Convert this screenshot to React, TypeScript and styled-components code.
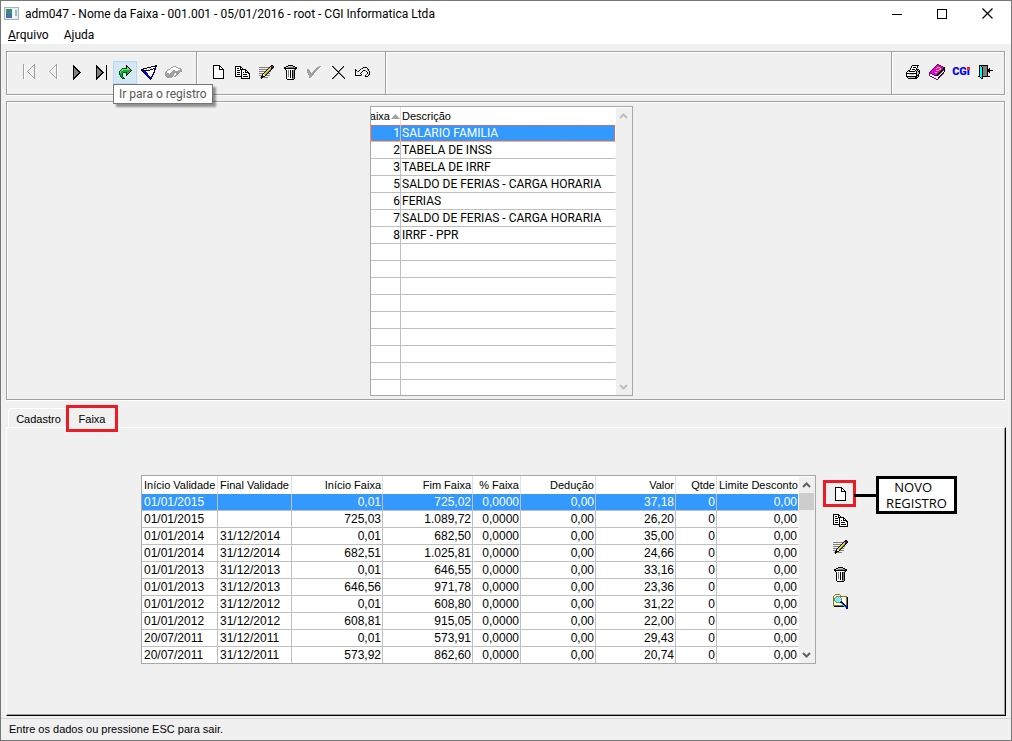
import React from "react";
import styled, { createGlobalStyle } from "styled-components";

const ui = 'Roboto, "Open Sans", sans-serif';
const grid = '"Liberation Sans", Arial, sans-serif';
const note = '"Open Sans", "Noto Sans", sans-serif';
const face = "#f0f0f0";
const line = "#a0a0a0";

const GlobalStyle = createGlobalStyle`
  *, *::before, *::after { box-sizing: border-box; }
  body { margin: 0; background: ${face}; color: #000; font: 11px/16px ${grid}; }
  button { margin: 0; padding: 0; border: 0; background: none; color: inherit; font: inherit; }
`;

/* ---------- pixel icons ---------- */

const palette: Record<string, string> = {
  K: "#000000",
  W: "#ffffff",
  G: "#808080",
  L: "#c0c0c0",
  A: "#a0a0a0",
  Y: "#e8e000",
  O: "#808000",
  M: "#e000e0",
  P: "#800080",
  B: "#0000ff",
  N: "#000080",
  C: "#00ffff",
  E: "#00b030",
  D: "#005018",
  H: "#70e870",
};

const art: Record<string, string[]> = {
  first: [
    "A..........A",
    "AW........AA",
    "AW.......AWA",
    "AW......AW.A",
    "AW.....AW..A",
    "AW....AW...A",
    "AW...AW....A",
    "AW..AW.....A",
    "AW...AW....A",
    "AW....AW...A",
    "AW.....AW..A",
    "AW......AW.A",
    "AW.......AWA",
    "AW........AA",
    "AW.........A",
    ".W..........",
  ],
  prev: [
    ".......A.",
    "......AAW",
    ".....AWAW",
    "....AW.AW",
    "...AW..AW",
    "..AW...AW",
    ".AW....AW",
    "AW.....AW",
    ".AW....AW",
    "..AW...AW",
    "...AW..AW",
    "....AW.AW",
    ".....AWAW",
    "......AAW",
    ".......AW",
    "........W",
  ],
  next: [
    "K.......",
    "KK......",
    "KKK.....",
    "KGKK....",
    "KGGKK...",
    "KGGGKK..",
    "KGGGGKK.",
    "KGGGGGKK",
    "KGGGGKK.",
    "KGGGKK..",
    "KGGKK...",
    "KGKK....",
    "KKK.....",
    "KK......",
    "K.......",
  ],
  last: [
    "K.........K",
    "KK........K",
    "KKK.......K",
    "KGKK......K",
    "KGGKK.....K",
    "KGGGKK....K",
    "KGGGGKK...K",
    "KGGGGGKK..K",
    "KGGGGKK...K",
    "KGGGKK....K",
    "KGGKK.....K",
    "KGKK......K",
    "KKK.......K",
    "KK........K",
    "K.........K",
  ],
  go: [
    ".......K.....",
    ".......KK....",
    ".......KHK...",
    "...DDDDKHHK..",
    "..DHHHHHHHHK.",
    ".DHHEEEEEEEEK",
    "DHEEEEEEEEEK.",
    "DHEEDDDDEEK..",
    "DEED...DEK...",
    "DEED...DK....",
    ".DED...K.....",
    ".DED.........",
    "..DED........",
    "...DDD.......",
  ],
  filter: [
    "..............KK",
    "..........KKKKBK",
    "......KKKKWWWWK.",
    "..KKKKWWLWLWKBK.",
    "KKBWWLWLWKKKWBK.",
    "KKKKKKKKKWWWWK..",
    ".KBBBWWWWWWWWK..",
    "..KBBBWWWWWWBK..",
    "...KBBBWWWWWK...",
    "....KBBWWWWBK...",
    ".....KBBWWWK....",
    "......KBBWBK....",
    ".......KBBK.....",
    "........KBK.....",
    ".........K......",
  ],
  eraser: [
    "........AAA......",
    "......AAWWWAA....",
    ".....AWWWWWWWAAA.",
    "...AAWWWWWWWWWWAA",
    "..AWWWWWAAWWWAAAA",
    ".AWWWWWAAAAAAAAAA",
    "AAWWWWAAAAAAAAAW.",
    "AAAAWAAAAAWAAAW..",
    "AAAAAAAAAWWAAW...",
    "AAAAAAAAAWAAW....",
    "WAAAAAAAWAAW.....",
    ".WAAAAAWWWW......",
    "..WWWWWW.........",
  ],
  doc: [
    "KKKKKKK....",
    "KWWWWWKK...",
    "KWWWWWKWK..",
    "KWWWWWKWWK.",
    "KWWWWWKKKKK",
    "KWWWWWWWWWK",
    "KWWWWWWWWWK",
    "KWWWWWWWWWK",
    "KWWWWWWWWWK",
    "KWWWWWWWWWK",
    "KWWWWWWWWWK",
    "KWWWWWWWWWK",
    "KWWWWWWWWWK",
    "KKKKKKKKKKK",
  ],
  copy: [
    "KKKKKK.........",
    "KWWWWKK........",
    "KWKKWKWK.......",
    "KWWWWKKKKKK....",
    "KWKKKWKWWWKK...",
    "KWWWWWKWWWKWK..",
    "KWKKKWKWKWKKKK.",
    "KWWWWWKWWWWWWKK",
    "KWKKKWKWKKKKWWK",
    "KWWWWWKWWWWWWWK",
    "KKKKKKKWKKKKKWK",
    "......KWWWWWWWK",
    "......KKKKKKKKK",
  ],
  edit: [
    "............KK.",
    "...........KPPK",
    "GGGGGGGGGGKLPPK",
    ".........KYLKK.",
    "GGGGGGGGKYYOK..",
    ".......KYYOK...",
    "GGGGGGKYYOKG...",
    ".....KYYOK.....",
    "GGGGKYYOKGG....",
    "...KWYOK.......",
    "GGGKWWKGGGG....",
    "..KKKK.........",
    ".GKKGGGGG......",
    "..K............",
  ],
  trash: [
    "....KKKKK....",
    "..KKLLLLLKK..",
    "KKLLGGGGGGGKK",
    "KKKKKKKKKKKKK",
    ".KWWWWWWWWGK.",
    "..KWGWKWKGK..",
    "..KWGWKWKGK..",
    "..KWGWKWKGK..",
    "..KWGWKWKGK..",
    "..KWGWKWKGK..",
    "..KWGWKWKGK..",
    "..KWGWKWKGK..",
    "..KWWWKWKGK..",
    "..KWWWWWGGK..",
    "...KKKKKKK...",
  ],
  check: [
    "............AA",
    "..........AAAW",
    ".........AAAW.",
    "AA......AAAW..",
    "AAA....AAAW...",
    "AAA...AAAW....",
    "AAAA.AAAW.....",
    ".AAAAAAW......",
    ".AAAAAAW......",
    "..AAAAW.......",
    "..AAAW........",
    "..AAW.........",
    "...W..........",
  ],
  cancel: [
    "KG.........K.",
    ".KG.......KG.",
    "..KG.....KG..",
    "...KG...KG...",
    "....KG.KG....",
    ".....KKG.....",
    "......KG.....",
    ".....KGKG....",
    "....KG..KG...",
    "...KG....KG..",
    "..KG......KG.",
    ".KG........KG",
    "KG..........K",
  ],
  undo: [
    "........KKKK...",
    "......GK....K..",
    "K....K......GK.",
    "KK..K...KKG..K.",
    "K.GK...K...K..K",
    "K.....K.....K.K",
    "K....K......K.K",
    "K.....K....G.GK",
    "KKKKKKG...K..K.",
    "..........KKK..",
  ],
  print: [
    "......KKKKKKK.",
    ".....KWWWWWK..",
    ".....KWKKKWK..",
    "....KWWWWWK...",
    "....KWKKKWKKK.",
    "..KKWWWWWKLKLK",
    ".KLKKKKKKLKLKK",
    "KWWWWWWWWWKLLK",
    "KKKKKKKKKKKLLK",
    "KWWWLYYLWWKLK.",
    "KWWWWWWWWWKKK.",
    "KKKKKKKKKKKLK.",
    ".KLLLLLLLKKK..",
    "..KKKKKKKKK...",
  ],
  book: [
    "........PP......",
    ".......PMMPP....",
    "......PMMMMMPP..",
    ".....PMMYYYMMMKK",
    "....PMMYMMMYMMKK",
    "...PMMMMMMYYMKKK",
    "..PMMMMYYYMMKKGK",
    ".PMMMMMMMMMKKGWK",
    "PMMMMMYYMMKKGWK.",
    "PPPMMMMMMKKGWKP.",
    "PWWPPMMMKKGWKP..",
    "PWWWWPPKKGWKP...",
    ".PPWWWWWWWKP....",
    "...PPWWWWKP.....",
    ".....PPWWP......",
    ".......PP.......",
  ],
  exit: [
    ".KKKKKKKKK.....",
    ".KCKGGGGGK.....",
    ".KCCKGGGGK.....",
    ".KCCKGGGGK.K...",
    ".KCCKGGGGKKK...",
    ".KCCKGGGGKKKKKK",
    ".KCCKGGGGKKK...",
    ".KCCKGGGGK.K...",
    ".KCCKGGGGK.....",
    ".KCCKGGGGK.....",
    ".KCCKGGGGK.....",
    "KKCCKKKKKKKK...",
    "..KCK..........",
    "...KK..........",
  ],
  search: [
    "..OOOOO........",
    ".OWWWWWO.......",
    "OWWGGGGOOOOOOO.",
    "OWGCWCWGWWWWWOK",
    "OGCWCWCWGWWWWOK",
    "OGWCWCWCGWWWWOK",
    "OGCWCWCWGWWWWOK",
    "OWGCWCWGKWWWWOK",
    "OWWGGGGKBKWWWOK",
    "OWWWWWWWCBKWWOK",
    "OWWWWWWWWCBKWOK",
    "OOOOOOOOOOCBKOK",
    ".KKKKKKKKKKCBNK",
    "............CBN",
    ".............NN",
  ],
};

function PixelIcon({ name }: { name: string }) {
  const rows = art[name];
  const width = rows[0].length;
  const marks: React.ReactNode[] = [];
  rows.forEach((row, y) => {
    let x = 0;
    while (x < row.length) {
      const key = row[x];
      let end = x + 1;
      while (end < row.length && row[end] === key) end += 1;
      if (key !== ".") {
        marks.push(<rect key={`${x}-${y}`} x={x} y={y} width={end - x} height={1} fill={palette[key]} />);
      }
      x = end;
    }
  });
  return (
    <svg width={width} height={rows.length} viewBox={`0 0 ${width} ${rows.length}`} shapeRendering="crispEdges" aria-hidden="true">
      {marks}
    </svg>
  );
}

/* ---------- window chrome ---------- */

const Window = styled.div`
  display: flex;
  flex-direction: column;
  min-height: 100vh;
  border: 1px solid #777;
  background: ${face};
`;

const TitleBar = styled.header`
  display: flex;
  align-items: center;
  height: 25px;
  padding-left: 3px;
  gap: 6px;
  background: #fff;
  font-family: ${ui};
`;

const Title = styled.h1`
  flex: 1;
  margin: 0;
  font-size: 12px;
  font-weight: 400;
  line-height: 16px;
  white-space: nowrap;
`;

const WindowButton = styled.button`
  display: grid;
  place-items: center;
  width: 40px;
  height: 24px;
`;

const WindowButtons = styled.div`
  display: flex;
  gap: 5px;
  padding-right: 4px;
`;

const MenuBar = styled.nav`
  display: flex;
  gap: 15px;
  height: 18px;
  padding-left: 7px;
  background: #fff;
  font: 12px/18px ${ui};
`;

const Etched = styled.div`
  margin: 0 6px 0 5px;
  border: 1px solid ${line};
  box-shadow: inset 1px 1px #fff, 1px 1px #fff;
`;

const Toolbar = styled(Etched)`
  display: flex;
  height: 44px;
  margin-top: 7px;
`;

const Group = styled.div<{ $divided?: boolean }>`
  display: flex;
  align-items: center;
  padding: 0 11px 2px 10px;
  ${(p) => p.$divided && `border-left: 1px solid ${line}; box-shadow: inset 1px 1px #fff; padding-left: 9px;`}
`;

const Spacer = styled(Group)`
  flex: 1;
`;

const SystemGroup = styled(Group)`
  padding-right: 7px;
`;

const ToolButton = styled.button<{ $hot?: boolean }>`
  position: relative;
  display: grid;
  place-items: center;
  width: 24px;
  height: 23px;
  ${(p) => p.$hot && "background: #d5e6f5; border: 1px solid #b8d8f2;"}
`;

const Tooltip = styled.span`
  position: absolute;
  top: 22px;
  left: -1px;
  z-index: 2;
  padding: 0 5px;
  border: 1px solid #767676;
  background: #fff;
  box-shadow: 3px 3px 2px rgba(0, 0, 0, 0.4);
  color: #575757;
  font: 12px/18px ${ui};
  white-space: nowrap;
`;

const Logo = styled.span`
  position: relative;
  color: #0000ff;
  font: 900 11px/14px ${ui};
`;

const LogoDot = styled.span`
  position: absolute;
  top: 2px;
  right: 0;
  width: 3px;
  height: 3px;
  background: #ff2020;
`;

const ListPanel = styled(Etched)`
  display: flex;
  justify-content: center;
  margin-top: 6px;
  padding: 4px 8px 3px 0;
`;

/* ---------- data grids ---------- */

const GridFrame = styled.div<{ $height?: number }>`
  display: flex;
  border: 1px solid #a8a8ac;
  background: #fff;
  overflow: hidden;
  ${(p) => p.$height && `height: ${p.$height}px;`}
`;

const Table = styled.table<{ $width: number }>`
  width: ${(p) => p.$width}px;
  table-layout: fixed;
  border-collapse: separate;
  border-spacing: 0;
  align-self: flex-start;
`;

const Head = styled.th<{ $right?: boolean }>`
  height: 18px;
  padding: 0 1px 0 2px;
  border-right: 1px solid #e0e0e0;
  font-weight: 400;
  line-height: 18px;
  text-align: ${(p) => (p.$right ? "right" : "left")};
  white-space: nowrap;
  overflow: hidden;
  &:last-child { border-right-color: #fff; }
`;

const SortHead = styled.span`
  display: flex;
  align-items: center;
  justify-content: flex-end;
  gap: 1px;
  overflow: hidden;
  > * { flex-shrink: 0; }
`;

const Cell = styled.td<{ $right?: boolean }>`
  height: 17px;
  padding: 0 1px 0 2px;
  border-right: 1px solid #c0c0c0;
  border-bottom: 1px solid #c0c0c0;
  font-size: 12px;
  line-height: 16px;
  text-align: ${(p) => (p.$right ? "right" : "left")};
  white-space: nowrap;
  overflow: hidden;
  &:last-child { border-right-color: #fff; }
`;

const Row = styled.tr<{ $selected?: boolean; $focus?: boolean }>`
  ${(p) => p.$selected && `color: #fff; ${Cell} { background: #3399ff; background-clip: padding-box; }`}
  ${(p) =>
    p.$focus &&
    `
    ${Cell} { position: relative; }
    ${Cell}::after { content: ""; position: absolute; inset: 0; border: 0 dashed #ff6038; border-width: 1px 0; }
    ${Cell}:first-child::after { border-left-width: 1px; }
    ${Cell}:last-child::after { border-right-width: 1px; }
  `}
`;

const ListTable = styled(Table)`
  ${Cell} { font-family: ${ui}; }
  ${Cell}:first-child, ${Head}:first-child { padding: 0; }
  ${Cell}:last-child, ${Head}:last-child { padding-left: 1px; }
`;

const Track = styled.div`
  display: flex;
  flex-direction: column;
  width: 16px;
  margin-top: 1px;
  background: ${face};
`;

const ScrollButton = styled.button`
  display: grid;
  place-items: center;
  height: 16px;
  padding-right: 1px;
`;

const Thumb = styled.div`
  height: 17px;
  margin-right: 1px;
  background: #cdcdcd;
`;

const TrackSpace = styled.div`
  flex: 1;
`;

function Scrollbar({ color, thumb }: { color: string; thumb?: boolean }) {
  return (
    <Track>
      <ScrollButton aria-label="Rolar para cima">
        <svg width="9" height="6" viewBox="0 0 9 6" aria-hidden="true">
          <path d="M1 5 4.500 1.500 8 5" fill="none" stroke={color} strokeWidth="2" />
        </svg>
      </ScrollButton>
      {thumb && <Thumb />}
      <TrackSpace />
      <ScrollButton aria-label="Rolar para baixo">
        <svg width="9" height="6" viewBox="0 0 9 6" aria-hidden="true">
          <path d="M1 1 4.500 4.500 8 1" fill="none" stroke={color} strokeWidth="2" />
        </svg>
      </ScrollButton>
    </Track>
  );
}

/* ---------- tabs and detail page ---------- */

const Tabs = styled.div`
  display: flex;
  align-items: flex-end;
  height: 27px;
  padding-left: 7px;
`;

const Tab = styled.button`
  width: 58px;
  height: 19px;
  padding: 1px 0 0 2px;
  border: 1px solid #fff;
  border-width: 1px 0 0 1px;
  border-radius: 3px 0 0 0;
  line-height: 16px;
`;

const ActiveTab = styled.button`
  position: relative;
  width: 52px;
  height: 27px;
  margin-bottom: -5px;
  border: 3px solid #ed1c24;
  background: ${face};
  line-height: 16px;
`;

const Page = styled.main`
  display: flex;
  flex: 1;
  align-items: flex-start;
  margin: 0 5px 2px 5px;
  padding: 47px 0 50px 134px;
  border: 1px solid #fff;
  border-right-color: #000;
  border-bottom-color: #000;
  box-shadow: inset -1px -1px #a0a0a0;
`;

const Actions = styled.div`
  display: flex;
  flex-direction: column;
  align-items: center;
  gap: 3px;
  margin: 5px 0 0 7px;
`;

const ActionButton = styled.button<{ $marked?: boolean }>`
  display: grid;
  place-items: center;
  width: 33px;
  height: 24px;
  padding-left: 1px;
  ${(p) => p.$marked && "height: 27px; margin-bottom: -2px; border: 3px solid #ed1c24;"}
`;

const Callout = styled.div`
  display: flex;
  align-items: center;
  margin-top: 1px;
  margin-left: -2px;
`;

const Connector = styled.div`
  width: 22px;
  height: 3px;
  background: #000;
`;

const CalloutBox = styled.p`
  width: 81px;
  height: 38px;
  margin: 0;
  border: 3px solid #000;
  background: #fff;
  font: 13px/16px ${note};
  text-align: center;
  white-space: pre;
`;

const StatusBar = styled.footer`
  height: 22px;
  padding-left: 8px;
  border-top: 1px solid #d4d4d4;
  line-height: 20px;
`;

const names: [string, string][] = [
  ["1", "SALARIO FAMILIA"],
  ["2", "TABELA DE INSS"],
  ["3", "TABELA DE IRRF"],
  ["5", "SALDO DE FERIAS - CARGA HORARIA"],
  ["6", "FERIAS"],
  ["7", "SALDO DE FERIAS - CARGA HORARIA"],
  ["8", "IRRF - PPR"],
];
const blankRows = Array.from({ length: 9 }, (_, i) => i);

const columns: { label: string; width: number; right?: boolean }[] = [
  { label: "Início Validade", width: 76 },
  { label: "Final Validade", width: 74 },
  { label: "Início Faixa", width: 91, right: true },
  { label: "Fim Faixa", width: 90, right: true },
  { label: "% Faixa", width: 48, right: true },
  { label: "Dedução", width: 75, right: true },
  { label: "Valor", width: 80, right: true },
  { label: "Qtde", width: 41, right: true },
  { label: "Limite Desconto", width: 82, right: true },
];

const ranges = [
  ["01/01/2015", "", "0,01", "725,02", "37,18"],
  ["01/01/2015", "", "725,03", "1.089,72", "26,20"],
  ["01/01/2014", "31/12/2014", "0,01", "682,50", "35,00"],
  ["01/01/2014", "31/12/2014", "682,51", "1.025,81", "24,66"],
  ["01/01/2013", "31/12/2013", "0,01", "646,55", "33,16"],
  ["01/01/2013", "31/12/2013", "646,56", "971,78", "23,36"],
  ["01/01/2012", "31/12/2012", "0,01", "608,80", "31,22"],
  ["01/01/2012", "31/12/2012", "608,81", "915,05", "22,00"],
  ["20/07/2011", "31/12/2011", "0,01", "573,91", "29,43"],
  ["20/07/2011", "31/12/2011", "573,92", "862,60", "20,74"],
].map(([from, to, start, end, value]) => [from, to, start, end, "0,0000", "0,00", value, "0", "0,00"]);

const Tool = ({ icon, label }: { icon: string; label: string }) => (
  <ToolButton aria-label={label}>
    <PixelIcon name={icon} />
  </ToolButton>
);

export default function App() {
  return (
    <Window>
      <GlobalStyle />
      <TitleBar>
        <svg width="15" height="13" viewBox="0 0 15 13" shapeRendering="crispEdges" aria-hidden="true">
          <rect width="15" height="13" fill="#a8b4b4" />
          <rect x="1" y="1" width="13" height="11" fill="#e8eef0" />
          <rect x="2" y="2" width="6" height="9" fill="#3c8a78" />
          <rect x="2" y="7" width="6" height="4" fill="#4a6ea8" />
          <rect x="9" y="2" width="2" height="9" fill="#fff" />
          <rect x="11" y="3" width="2" height="6" fill="#98c0b0" />
        </svg>
        <Title>adm047 - Nome da Faixa - 001.001 - 05/01/2016 - root - CGI Informatica Ltda</Title>
        <WindowButtons>
          <WindowButton aria-label="Minimizar">
            <svg width="10" height="10" viewBox="0 0 10 10" shapeRendering="crispEdges">
              <rect y="5" width="10" height="1" />
            </svg>
          </WindowButton>
          <WindowButton aria-label="Maximizar">
            <svg width="10" height="10" viewBox="0 0 10 10" shapeRendering="crispEdges">
              <path d="M.5.500h9v9h-9z" fill="none" stroke="#000" />
            </svg>
          </WindowButton>
          <WindowButton aria-label="Fechar">
            <svg width="11" height="11" viewBox="0 0 11 11">
              <path d="m.5.500 10 10m0-10-10 10" stroke="#000" strokeWidth="1.200" />
            </svg>
          </WindowButton>
        </WindowButtons>
      </TitleBar>
      <MenuBar>
        <button><u>A</u>rquivo</button>
        <button>Ajuda</button>
      </MenuBar>

      <Toolbar role="toolbar">
        <Group>
          <Tool icon="first" label="Primeiro" />
          <Tool icon="prev" label="Anterior" />
          <Tool icon="next" label="Próximo" />
          <Tool icon="last" label="Último" />
          <ToolButton $hot aria-describedby="tip" aria-label="Ir para o registro">
            <PixelIcon name="go" />
            <Tooltip id="tip" role="tooltip">Ir para o registro</Tooltip>
          </ToolButton>
          <Tool icon="filter" label="Filtrar" />
          <Tool icon="eraser" label="Limpar filtro" />
        </Group>
        <Group $divided>
          <Tool icon="doc" label="Novo" />
          <Tool icon="copy" label="Copiar" />
          <Tool icon="edit" label="Editar" />
          <Tool icon="trash" label="Excluir" />
          <Tool icon="check" label="Confirmar" />
          <Tool icon="cancel" label="Cancelar" />
          <Tool icon="undo" label="Desfazer" />
        </Group>
        <Spacer $divided />
        <SystemGroup $divided>
          <Tool icon="print" label="Imprimir" />
          <Tool icon="book" label="Manual" />
          <ToolButton aria-label="CGi">
            <Logo>CGi<LogoDot /></Logo>
          </ToolButton>
          <Tool icon="exit" label="Sair" />
        </SystemGroup>
      </Toolbar>

      <ListPanel>
        <GridFrame $height={290}>
          <ListTable $width={245}>
            <colgroup>
              <col width={30} />
              <col width={215} />
            </colgroup>
            <thead>
              <tr>
                <Head $right>
                  <SortHead>
                    <span>Faixa</span>
                    <svg width="9" height="5" viewBox="0 0 9 5" aria-hidden="true">
                      <path d="M0 5 4.500 0 9 5z" fill="#a0a0a0" />
                    </svg>
                  </SortHead>
                </Head>
                <Head>Descrição</Head>
              </tr>
            </thead>
            <tbody>
              {names.map(([id, name], i) => (
                <Row key={id} $selected={i === 0} $focus={i === 0}>
                  <Cell $right>{id}</Cell>
                  <Cell>{name}</Cell>
                </Row>
              ))}
              {blankRows.map((i) => (
                <Row key={i}>
                  <Cell />
                  <Cell />
                </Row>
              ))}
            </tbody>
          </ListTable>
          <Scrollbar color="#bfbfbf" />
        </GridFrame>
      </ListPanel>

      <Tabs role="tablist">
        <Tab role="tab" aria-selected="false">Cadastro</Tab>
        <ActiveTab role="tab" aria-selected="true">Faixa</ActiveTab>
      </Tabs>
      <Page>
        <GridFrame $height={189}>
          <Table $width={657}>
            <colgroup>
              {columns.map((c) => (
                <col key={c.label} width={c.width} />
              ))}
            </colgroup>
            <thead>
              <tr>
                {columns.map((c) => (
                  <Head key={c.label} $right={c.right}>{c.label}</Head>
                ))}
              </tr>
            </thead>
            <tbody>
              {ranges.map((cells, i) => (
                <Row key={i} $selected={i === 0}>
                  {cells.map((value, j) => (
                    <Cell key={j} $right={columns[j].right}>{value}</Cell>
                  ))}
                </Row>
              ))}
            </tbody>
          </Table>
          <Scrollbar color="#606060" thumb />
        </GridFrame>
        <Actions>
          <ActionButton $marked aria-label="Novo registro"><PixelIcon name="doc" /></ActionButton>
          <ActionButton aria-label="Copiar registro"><PixelIcon name="copy" /></ActionButton>
          <ActionButton aria-label="Editar registro"><PixelIcon name="edit" /></ActionButton>
          <ActionButton aria-label="Excluir registro"><PixelIcon name="trash" /></ActionButton>
          <ActionButton aria-label="Consultar registro"><PixelIcon name="search" /></ActionButton>
        </Actions>
        <Callout>
          <Connector />
          <CalloutBox>{"NOVO\u00a0\u00a0\nREGISTRO"}</CalloutBox>
        </Callout>
      </Page>
      <StatusBar>Entre os dados ou pressione ESC para sair.</StatusBar>
    </Window>
  );
}
